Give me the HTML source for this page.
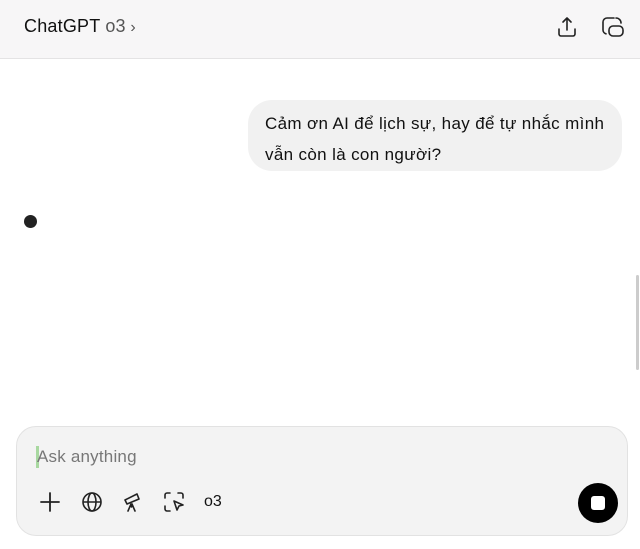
<!DOCTYPE html>
<html><head><meta charset="utf-8"><style>
*{margin:0;padding:0;box-sizing:border-box}
body{width:640px;height:549px;background:#fff;font-family:"Liberation Sans",sans-serif;position:relative;overflow:hidden;color:#0d0d0d}
.hdr{position:absolute;left:0;top:0;width:640px;height:59px;background:#f7f6f7;border-bottom:1px solid #e4e3e4}
.title{position:absolute;left:24px;top:16px;font-size:18px;color:#111;letter-spacing:0.2px}
.title span{color:#555}
.bub{position:absolute;left:248px;top:100px;width:374px;height:71px;background:#f1f1f1;border-radius:24px;padding:8px 17px;font-size:17px;line-height:31px;color:#111;letter-spacing:0.35px;white-space:nowrap}
.dot{position:absolute;left:24px;top:215px;width:13px;height:13px;border-radius:50%;background:#222}
.inp{position:absolute;left:16px;top:426px;width:612px;height:110px;background:#f3f3f3;border:1px solid #e2e2e2;border-radius:20px}
.ph{position:absolute;left:20px;top:20px;font-size:17px;color:#777;letter-spacing:0.2px}
.cur{position:absolute;left:19px;top:19px;width:3px;height:22px;background:#a8d8a0}
.o3{position:absolute;left:187px;top:66px;font-size:16px;color:#111}
.stop{position:absolute;left:561px;top:56px;width:40px;height:40px;border-radius:50%;background:#000}
.stop i{position:absolute;left:13px;top:13px;width:14px;height:14px;background:#fff;border-radius:3px}
svg{position:absolute}
.sb{position:absolute;left:636px;top:275px;width:3px;height:95px;background:#ccc;border-radius:2px}
</style></head><body>
<div class="hdr">
<div class="title">ChatGPT <span>o3</span><span style="font-size:16px"> ›</span></div>
<svg style="left:555px;top:15px" width="24" height="24" viewBox="0 0 24 24" fill="none" stroke="#222" stroke-width="1.6" stroke-linecap="round" stroke-linejoin="round"><path d="M12 3v12M8 7l4-4 4 4M4 14v5a2 2 0 0 0 2 2h12a2 2 0 0 0 2-2v-5"/></svg>
<svg style="left:600px;top:15px" width="26" height="24" viewBox="0 0 26 24" fill="none" stroke="#222" stroke-width="1.6" stroke-linecap="round"><path d="M14 3H7a4 4 0 0 0-4 4v8a4 4 0 0 0 3 3.8"/><rect x="9" y="11" width="14" height="10" rx="4"/><path d="M16 3a5 5 0 0 1 5 5"/></svg>
</div>
<div class="bub">Cảm ơn AI để lịch sự, hay để tự nhắc mình<br>vẫn còn là con người?</div>
<div class="dot"></div>
<div class="sb"></div>
<div class="inp">
<div class="cur"></div>
<div class="ph">Ask anything</div>
<svg style="left:22px;top:64px" width="22" height="22" viewBox="0 0 22 22" fill="none" stroke="#222" stroke-width="1.8" stroke-linecap="round"><path d="M11 2v18M2 11h18"/></svg>
<svg style="left:64px;top:64px" width="22" height="22" viewBox="0 0 22 22" fill="none" stroke="#222" stroke-width="1.6"><circle cx="11" cy="11" r="9"/><ellipse cx="11" cy="11" rx="4" ry="9"/><path d="M2 11h18"/></svg>
<svg style="left:105px;top:64px" width="22" height="22" viewBox="0 0 22 22" fill="none" stroke="#222" stroke-width="1.6" stroke-linecap="round" stroke-linejoin="round"><path d="M3 9l12-6 2 5-12 5z"/><path d="M9 13l-3 7M10 13l3 7M9.5 13v3"/></svg>
<svg style="left:146px;top:64px" width="22" height="22" viewBox="0 0 22 22" fill="none" stroke="#222" stroke-width="1.6" stroke-linecap="round" stroke-linejoin="round"><path d="M2 7V4a2 2 0 0 1 2-2h3M15 2h3a2 2 0 0 1 2 2v3M2 15v3a2 2 0 0 0 2 2h3"/><path d="M11 10l9 4-4 1-2 4z"/></svg>
<div class="o3">o3</div>
<div class="stop"><i></i></div>
</div>
</body></html>
